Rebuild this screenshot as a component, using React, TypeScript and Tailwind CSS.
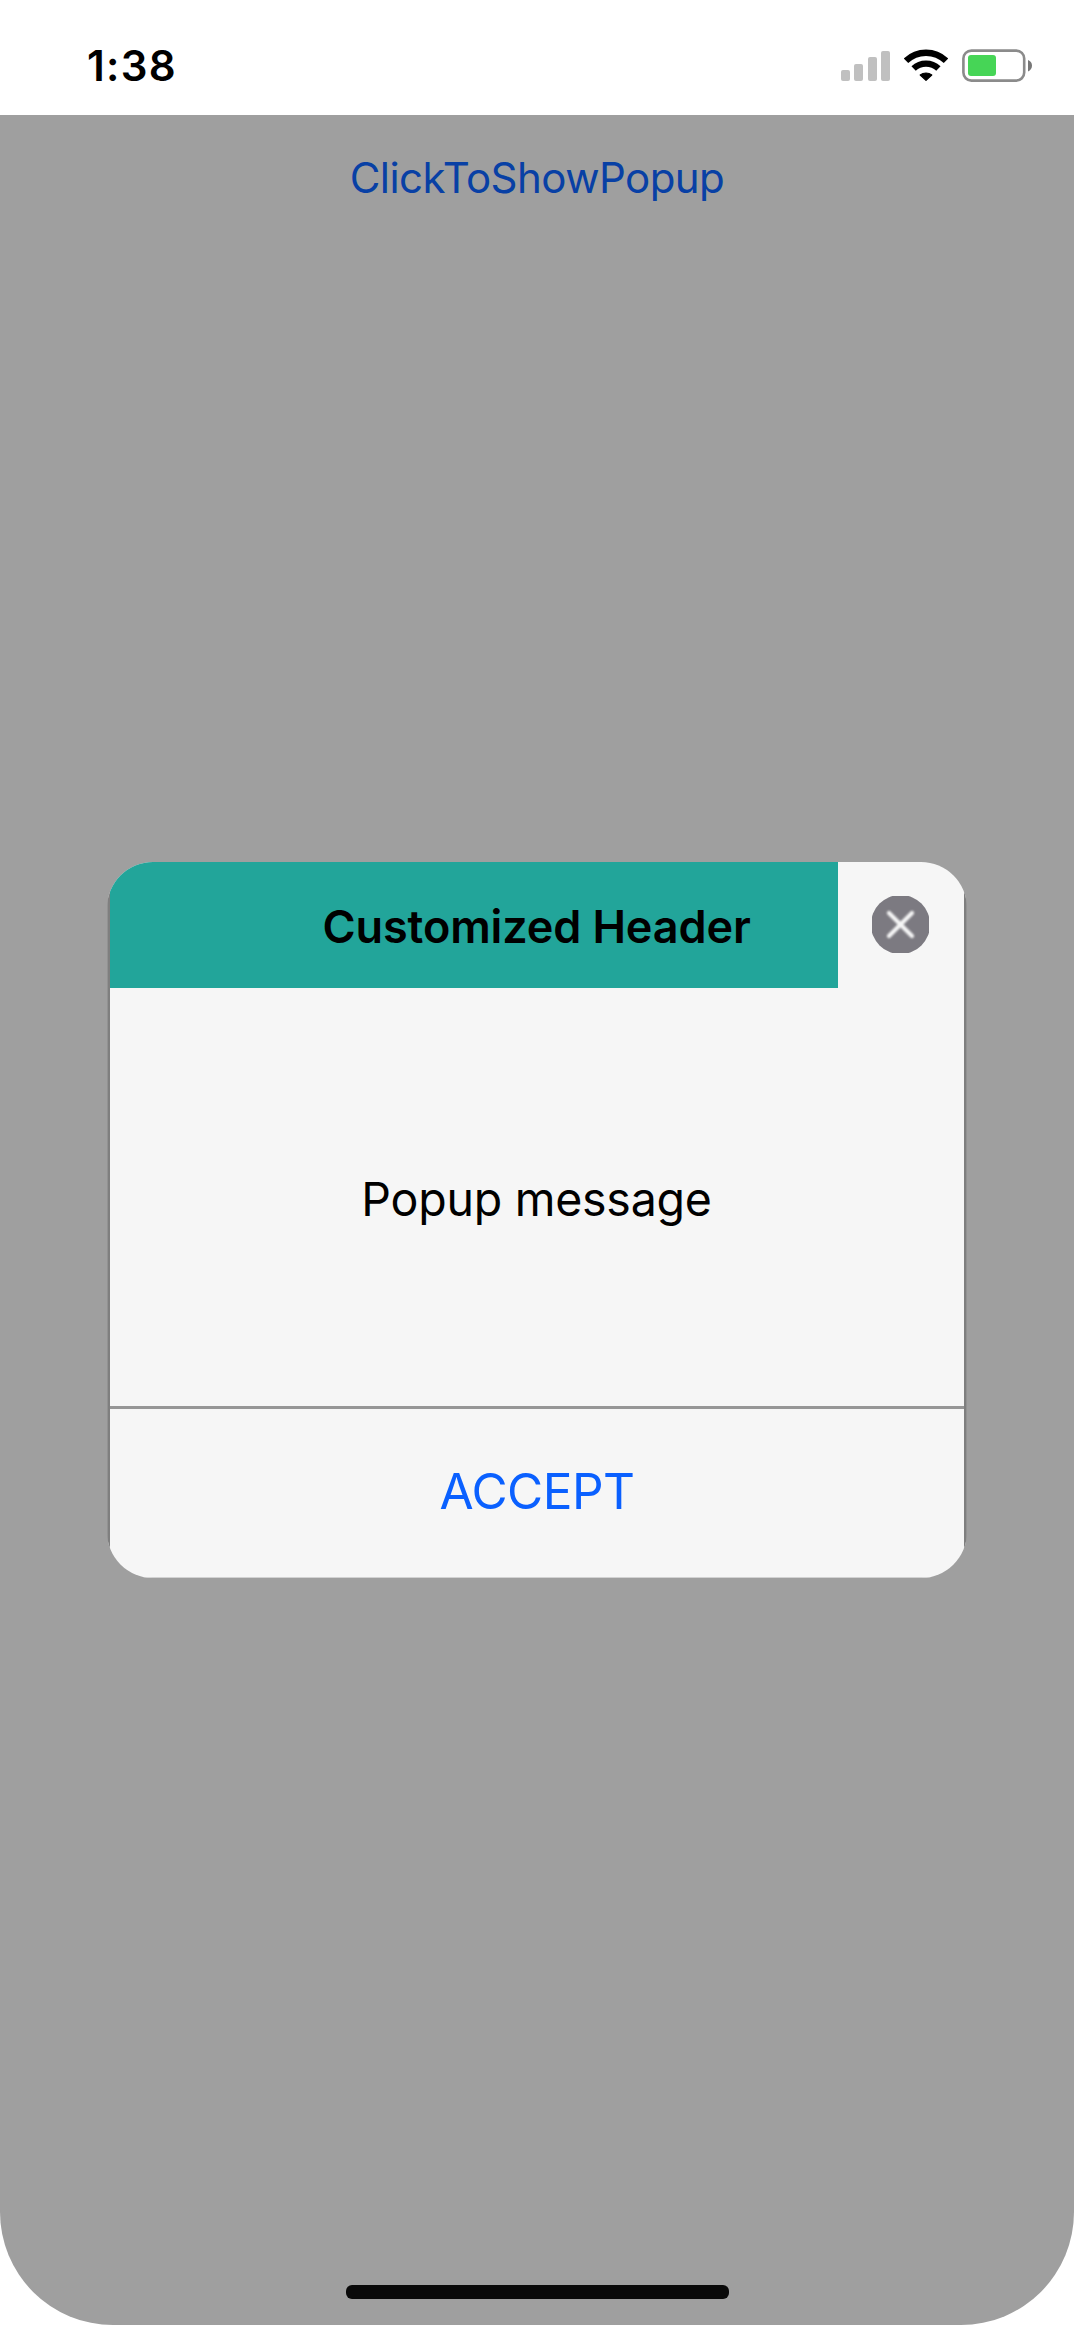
import React from "react";

function SignalIcon() {
  return (
    <div className="flex h-[30px] items-end gap-[4.3px]">
      <span className="h-[11px] w-[9px] rounded-[2px] bg-[#c0c0c0]" />
      <span className="h-[17px] w-[9px] rounded-[2px] bg-[#c0c0c0]" />
      <span className="h-[24px] w-[9px] rounded-[2px] bg-[#c0c0c0]" />
      <span className="h-[30px] w-[9px] rounded-[2px] bg-[#c0c0c0]" />
    </div>
  );
}

function WifiIcon() {
  return (
    <svg width="44" height="33" viewBox="0 0 44 33" fill="none" stroke="#000">
      <path d="M2 11.8A28.8 28.8 0 0 1 42 11.8" strokeWidth="6.4" />
      <path d="M9.6 19.6A17.9 17.9 0 0 1 34.4 19.6" strokeWidth="6.2" />
      <path
        d="M22 31.4L16.2 26A9.4 9.4 0 0 1 27.8 26Z"
        fill="#000"
        strokeWidth="1.2"
        strokeLinejoin="round"
      />
    </svg>
  );
}

function BatteryIcon() {
  return (
    <svg width="71" height="33" viewBox="0 0 71 33">
      <rect x="1.4" y="1.6" width="60.8" height="30" rx="8" fill="none" stroke="#8b8b8b" strokeWidth="2.6" />
      <rect x="6" y="6" width="28" height="21" rx="3" fill="#46d556" />
      <path d="M66 11C68.6 12 70 14 70 16.6C70 19.2 68.6 21.6 66 22.6Z" fill="#777" />
    </svg>
  );
}

function CloseIcon() {
  return (
    <svg width="57" height="57" viewBox="-28.5 -28.5 57 57">
      <circle r="29.6" fill="#7c7a81" />
      <path
        d="M-11.5 -11.5L11.5 11.5M11.5 -11.5L-11.5 11.5"
        stroke="#f6f6f6"
        strokeWidth="4.2"
        strokeLinecap="round"
        className="blur-[1px]"
      />
    </svg>
  );
}

export default function App() {
  return (
    <div className="flex h-[2325px] w-[1074px] flex-col bg-white font-['Inter',sans-serif]">
      <header className="flex h-[115px] shrink-0 items-start justify-between pr-[41px] pl-[87px]">
        <time className="mt-[36px] text-[42px] leading-[60px] font-semibold tracking-[1.3px] text-black">1:38</time>
        <div className="mt-[49px] flex items-start">
          <div className="mt-[2px] mr-[14px]">
            <SignalIcon />
          </div>
          <WifiIcon />
          <div className="ml-[14px]">
            <BatteryIcon />
          </div>
        </div>
      </header>

      <main className="flex flex-1 flex-col items-center rounded-b-[113px] bg-[#9f9f9f]">
        <button className="mt-[33px] h-[60px] text-[42px] leading-[60px] tracking-[-0.55px] text-[#0840a5]">
          ClickToShowPopup
        </button>

        <section className="mt-[654px] h-[716px] w-[860px] overflow-hidden rounded-[46px]">
          <div className="h-full border-x border-[#929292]">
            <div className="flex h-full flex-col border-x-2 border-b border-x-[#7f7f7f] border-b-[#d2d2d2] bg-[#f6f6f6]">
              <div className="flex h-[126px] shrink-0">
                <h1 className="h-[126px] w-[728px] bg-[#22a59a] pl-[212.5px] text-[45px] leading-[130px] font-semibold tracking-[-0.12px] whitespace-nowrap text-black">
                  Customized Header
                </h1>
                <button className="flex flex-1 items-center justify-center pr-px pb-px" aria-label="Close">
                  <CloseIcon />
                </button>
              </div>
              <p className="h-[418px] shrink-0 pr-px text-center text-[46.5px] leading-[423px] tracking-[-0.25px] text-black">
                Popup message
              </p>
              <button className="flex-1 border-t-3 border-[#969696] pb-[5px] text-[49.5px] leading-[150px] tracking-[-0.5px] text-[#0a60ff]">
                ACCEPT
              </button>
            </div>
          </div>
        </section>

        <div className="mt-auto mb-[26px] h-[14px] w-[383px] rounded-[6px] bg-[#0a0a0a]" />
      </main>
    </div>
  );
}
